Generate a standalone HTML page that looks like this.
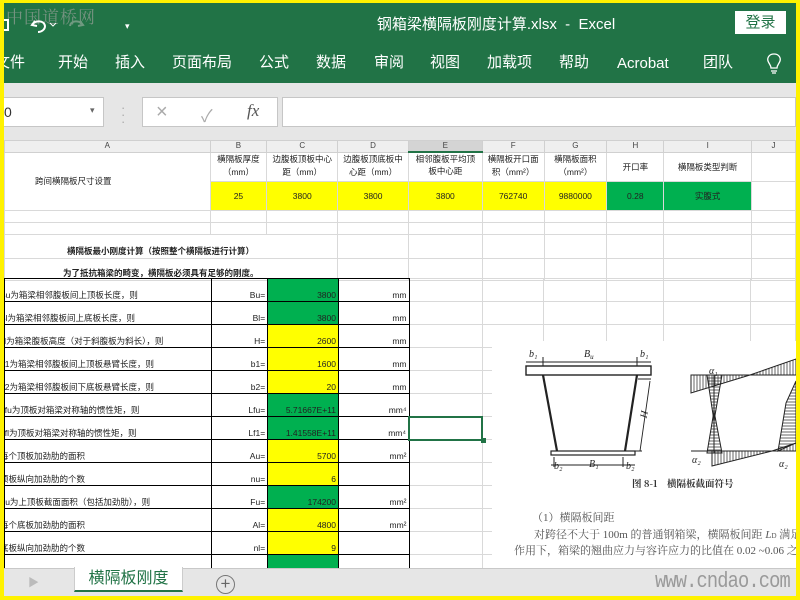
<!DOCTYPE html>
<html><head><meta charset="utf-8">
<style>
*{margin:0;padding:0;box-sizing:border-box}
body{width:800px;height:600px;overflow:hidden;background:#fff200;position:relative;font-family:"Liberation Sans","Noto Sans CJK SC",sans-serif}
.a{position:absolute}
#frame{position:absolute;left:4px;top:3px;width:792px;height:593px;overflow:hidden;background:#fff}
#green{left:0;top:0;width:792px;height:80px;background:#217346}
.tab{position:absolute;top:50px;color:#fff;font-size:15px;white-space:nowrap;line-height:20px}
#fbar{left:0;top:80px;width:792px;height:57px;background:#e6e6e6}
table{border-collapse:collapse;table-layout:fixed;position:absolute;left:0;top:137px}
td{border:1px solid #d9d9d9;font-size:8.5px;color:#222;white-space:nowrap;overflow:visible;padding:0 2px;vertical-align:bottom;line-height:12px}
th{background:#efefef;border:1px solid #d0d0d0;font-weight:normal;font-size:8px;color:#444;height:11px;line-height:10px}
.y{background:#ffff00}.g{background:#00b050}
.r{text-align:right}.c{text-align:center}
.bk td.k{border:1px solid #000}
.lab{overflow:hidden;text-indent:-8px}
</style></head><body>
<div id="frame">
 <div class="a" id="green"></div>
 <div class="a" style="left:2px;top:0;font-size:17px;color:#8a9a8f;letter-spacing:1px;font-family:'Noto Serif CJK SC',serif;opacity:.8">中国道桥网</div>
 <div class="a" style="left:0;top:16px;width:5px;height:12px;border:2px solid #fff;border-left:none"></div>
 <svg class="a" style="left:26px;top:12px" width="60" height="20"><path d="M5 6 L2 10 L7 11 M2 10 C5 5 14 5 15 11 C15 15 11 17 8 17" stroke="#fff" stroke-width="2" fill="none"/><path d="M50 6 L53 10 L48 11 M53 10 C50 5 41 5 40 11" stroke="#6f9a80" stroke-width="2" fill="none"/><path d="M20 8 l3 3 l3 -3" stroke="#fff" fill="none"/></svg>
 <div class="a" style="left:121px;top:18px;color:#fff;font-size:9px">▾</div>
 <div class="a" style="left:0;top:10px;width:792px;text-align:center;color:#fff;font-size:15px;padding-left:192px;">钢箱梁横隔板刚度计算.xlsx &nbsp;- &nbsp;Excel</div>
 <div class="a" style="left:731px;top:8px;width:51px;height:23px;background:#fff;color:#217346;font-size:15px;text-align:center;line-height:23px">登录</div>
 <div class="tab" style="left:-9px">文件</div>
 <div class="tab" style="left:54px">开始</div>
 <div class="tab" style="left:111px">插入</div>
 <div class="tab" style="left:168px">页面布局</div>
 <div class="tab" style="left:255px">公式</div>
 <div class="tab" style="left:312px">数据</div>
 <div class="tab" style="left:370px">审阅</div>
 <div class="tab" style="left:426px">视图</div>
 <div class="tab" style="left:483px">加载项</div>
 <div class="tab" style="left:555px">帮助</div>
 <div class="tab" style="left:613px;top:51px">Acrobat</div>
 <div class="tab" style="left:699px">团队</div>
 <svg class="a" style="left:762px;top:49px" width="16" height="24"><path d="M8 2 C3 2 1 6 2 9 C3 12 5 13 5 16 L11 16 C11 13 13 12 14 9 C15 6 13 2 8 2 Z M5 19 H11 M6 21 H10" stroke="#fff" stroke-width="1.3" fill="none"/></svg>
 <div class="a" id="fbar"></div>
 <div class="a" style="left:-1px;top:94px;width:101px;height:30px;background:#fff;border:1px solid #c6c6c6;font-size:14px;line-height:28px;color:#333">0</div>
 <div class="a" style="left:86px;top:102px;font-size:9px;color:#666">▾</div>
 <div class="a" style="left:117px;top:101px;font-size:13px;color:#aaa;line-height:7px">·<br>·<br>·</div>
 <div class="a" style="left:138px;top:94px;width:136px;height:30px;background:#fff;border:1px solid #c6c6c6"></div>
 <div class="a" style="left:152px;top:98px;font-size:20px;color:#aaa">×</div>
 <div class="a" style="left:197px;top:99px;font-size:17px;color:#aaa">✓</div>
 <div class="a" style="left:243px;top:98px;font-size:17px;color:#555;font-family:'Liberation Serif',serif;font-style:italic">fx</div>
 <div class="a" style="left:278px;top:94px;width:514px;height:30px;background:#fff;border:1px solid #c6c6c6"></div>

 <table>
 <colgroup><col style="width:207px"><col style="width:57px"><col style="width:71px"><col style="width:71px"><col style="width:74px"><col style="width:62px"><col style="width:63px"><col style="width:58px"><col style="width:88px"><col style="width:45px"></colgroup>
 <tr><th>A</th><th>B</th><th>C</th><th>D</th><th style="background:#d4d4d4;border-bottom:2px solid #217346">E</th><th>F</th><th>G</th><th>H</th><th>I</th><th>J</th></tr>
 <tr style="height:29px"><td rowspan="2" class="c" style="vertical-align:middle;padding-right:70px">跨间横隔板尺寸设置</td>
  <td class="c" style="vertical-align:top;line-height:13px">横隔板厚度<br>（mm）</td><td class="c" style="vertical-align:top;line-height:13px">边腹板顶板中心<br>距（mm）</td><td class="c" style="vertical-align:top;line-height:13px">边腹板顶底板中<br>心距（mm）</td><td class="c" style="vertical-align:top;line-height:12px;overflow:hidden">相邻腹板平均顶<br>板中心距</td><td class="c" style="vertical-align:top;line-height:13px">横隔板开口面<br>积（mm²）</td><td class="c" style="vertical-align:top;line-height:13px">横隔板面积<br>（mm²）</td><td class="c" style="vertical-align:middle">开口率</td><td class="c" style="vertical-align:middle">横隔板类型判断</td><td></td></tr>
 <tr style="height:29px"><td class="y c" style="vertical-align:middle">25</td><td class="y c" style="vertical-align:middle">3800</td><td class="y c" style="vertical-align:middle">3800</td><td class="y c" style="vertical-align:middle">3800</td><td class="y c" style="vertical-align:middle">762740</td><td class="y c" style="vertical-align:middle">9880000</td><td class="g c" style="vertical-align:middle">0.28</td><td class="g c" style="vertical-align:middle">实腹式</td><td></td></tr>
 <tr style="height:12px"><td></td><td></td><td></td><td></td><td></td><td></td><td></td><td></td><td></td><td></td></tr>
 <tr style="height:12px"><td></td><td></td><td></td><td></td><td></td><td></td><td></td><td></td><td></td><td></td></tr>
 <tr style="height:24px"><td colspan="3" style="font-weight:bold;padding-left:62px;vertical-align:middle;padding-top:10px">横隔板最小刚度计算（按照整个横隔板进行计算）</td><td></td><td></td><td></td><td></td><td></td><td></td><td></td></tr>
 <tr style="height:22px"><td colspan="3" style="font-weight:bold;padding-left:58px;vertical-align:bottom;padding-bottom:1px">为了抵抗箱梁的畸变，横隔板必须具有足够的刚度。</td><td></td><td></td><td></td><td></td><td></td><td></td><td></td></tr>
 </table>

 <table style="top:275px" class="bk">
 <colgroup><col style="width:207px"><col style="width:57px"><col style="width:71px"><col style="width:71px"><col style="width:74px"><col style="width:62px"><col style="width:63px"><col style="width:58px"><col style="width:88px"><col style="width:45px"></colgroup>
 <tr style="height:23px"><td class="k lab">Bu为箱梁相邻腹板间上顶板长度，则</td><td class="k r">Bu=</td><td class="k g r">3800</td><td class="k r">mm</td><td></td><td></td><td></td><td></td><td></td><td></td></tr>
 <tr style="height:23px"><td class="k lab">Bl为箱梁相邻腹板间上底板长度，则</td><td class="k r">Bl=</td><td class="k g r">3800</td><td class="k r">mm</td><td></td><td></td><td></td><td></td><td></td><td></td></tr>
 <tr style="height:23px"><td class="k lab">H为箱梁腹板高度（对于斜腹板为斜长），则</td><td class="k r">H=</td><td class="k y r">2600</td><td class="k r">mm</td><td></td><td></td><td></td><td></td><td></td><td></td></tr>
 <tr style="height:23px"><td class="k lab">b1为箱梁相邻腹板间上顶板悬臂长度，则</td><td class="k r">b1=</td><td class="k y r">1600</td><td class="k r">mm</td><td></td><td></td><td></td><td></td><td></td><td></td></tr>
 <tr style="height:23px"><td class="k lab">b2为箱梁相邻腹板间下底板悬臂长度，则</td><td class="k r">b2=</td><td class="k y r">20</td><td class="k r">mm</td><td></td><td></td><td></td><td></td><td></td><td></td></tr>
 <tr style="height:23px"><td class="k lab">Lfu为顶板对箱梁对称轴的惯性矩，则</td><td class="k r">Lfu=</td><td class="k g r">5.71667E+11</td><td class="k r">mm⁴</td><td></td><td></td><td></td><td></td><td></td><td></td></tr>
 <tr style="height:23px"><td class="k lab">Lfl为顶板对箱梁对称轴的惯性矩，则</td><td class="k r">Lf1=</td><td class="k g r">1.41558E+11</td><td class="k r">mm⁴</td><td style="border:2px solid #217346"></td><td></td><td></td><td></td><td></td><td></td></tr>
 <tr style="height:23px"><td class="k lab">每个顶板加劲肋的面积</td><td class="k r">Au=</td><td class="k y r">5700</td><td class="k r">mm²</td><td></td><td></td><td></td><td></td><td></td><td></td></tr>
 <tr style="height:23px"><td class="k lab">顶板纵向加劲肋的个数</td><td class="k r">nu=</td><td class="k y r">6</td><td class="k r"></td><td></td><td></td><td></td><td></td><td></td><td></td></tr>
 <tr style="height:23px"><td class="k lab">Fu为上顶板截面面积（包括加劲肋），则</td><td class="k r">Fu=</td><td class="k g r">174200</td><td class="k r">mm²</td><td></td><td></td><td></td><td></td><td></td><td></td></tr>
 <tr style="height:23px"><td class="k lab">每个底板加劲肋的面积</td><td class="k r">Al=</td><td class="k y r">4800</td><td class="k r">mm²</td><td></td><td></td><td></td><td></td><td></td><td></td></tr>
 <tr style="height:23px"><td class="k lab">底板纵向加劲肋的个数</td><td class="k r">nl=</td><td class="k y r">9</td><td class="k r"></td><td></td><td></td><td></td><td></td><td></td><td></td></tr>
 <tr style="height:23px"><td class="k"></td><td class="k"></td><td class="k g"></td><td class="k"></td><td></td><td></td><td></td><td></td><td></td><td></td></tr>
 </table>
 <div class="a" style="left:477px;top:435px;width:5px;height:5px;background:#217346"></div>

 <svg class="a" style="left:488px;top:338px;background:#fff" width="304" height="229" font-family="Liberation Serif,Noto Serif CJK SC,serif">
  <defs><pattern id="v" width="3" height="3" patternUnits="userSpaceOnUse"><path d="M1 0V3" stroke="#222" stroke-width=".7"/></pattern>
  <pattern id="h" width="3" height="3" patternUnits="userSpaceOnUse"><path d="M0 1H3" stroke="#222" stroke-width=".7"/></pattern></defs>
  <g stroke="#222" fill="none" stroke-width="1">
   <rect x="34" y="25" width="125" height="9" stroke-width="1.4"/>
   <path d="M51 34 L65 110 M145 34 L133 110" stroke-width="2.2"/>
   <rect x="59" y="110" width="84" height="4" stroke-width="1.2"/>
   <path d="M34 21H159 M51 16V25 M145 16V25 M62 116V126 M59 124H143 M131 116V126"/>
   <path d="M146 38 L159 38 M158 40 L148 110 M142 110H150" stroke-width=".9"/>
   <path d="M199 34H304 M222 34V112 M199 110H304"/>
   <polygon points="199,34 199,52 258,34" fill="url(#v)"/>
   <polygon points="258,34 304,18 304,34" fill="url(#v)"/>
   <polygon points="220,110 220,125 280,110" fill="url(#v)"/>
   <polygon points="280,110 304,102 304,110" fill="url(#v)"/>
   <polygon points="215,34 230,34 222,80" fill="url(#h)"/>
   <polygon points="222,70 215,112 230,112" fill="url(#h)"/>
   <polygon points="304,40 294,62 286,110 304,102" fill="url(#h)"/>
  </g>
  <g font-size="10" font-style="italic" fill="#222">
   <text x="37" y="16">b₁</text><text x="92" y="16">B<tspan font-size="7" dy="2">u</tspan></text><text x="148" y="16">b₁</text>
   <text x="62" y="128">b₂</text><text x="97" y="126">B₁</text><text x="134" y="128">b₂</text>
   <text x="150" y="78" transform="rotate(-80 152 75)">H</text>
   <text x="217" y="33">α₁</text><text x="200" y="122">α₂</text><text x="287" y="126">α₂</text>
  </g>
  <text x="140" y="146" font-size="9.5" font-weight="bold" fill="#333" font-family="Noto Serif CJK SC,serif">图 8-1　横隔板截面符号</text>
  <g font-size="11" fill="#555" font-family="Liberation Serif,Noto Serif CJK SC,serif">
   <text x="40" y="180">（1）横隔板间距</text>
   <text x="42" y="197">对跨径不大于 100m 的普通钢箱梁，横隔板间距 <tspan font-style="italic">L</tspan><tspan font-size="7">D</tspan> 满足以下要</text>
   <text x="22" y="213">作用下，箱梁的翘曲应力与容许应力的比值在 0.02 ~0.06 之间。</text>
  </g>
 </svg>

 <div class="a" style="left:0;top:565px;width:792px;height:28px;background:#e6e6e6;border-top:1px solid #c8c8c8"></div>
 <div class="a" style="left:24px;top:571px;color:#bbb;font-size:11px">▶</div>
 <div class="a" style="left:70px;top:564px;width:109px;height:25px;background:#fff;border-left:1px solid #ccc;border-right:1px solid #ccc;border-bottom:2px solid #217346;color:#217346;font-size:16px;text-align:center;line-height:24px">横隔板刚度</div>
 <div class="a" style="left:212px;top:572px;width:19px;height:19px;border:1.5px solid #777;border-radius:50%;color:#666;font-size:17px;line-height:15px;text-align:center">+</div>
 <div class="a" style="left:651px;top:566px;color:#9a9a9a;font-size:22px;font-family:'Liberation Mono',monospace;letter-spacing:-1px;transform:scaleX(.85);transform-origin:left">www.cndao.com</div>
</div>
</body></html>
